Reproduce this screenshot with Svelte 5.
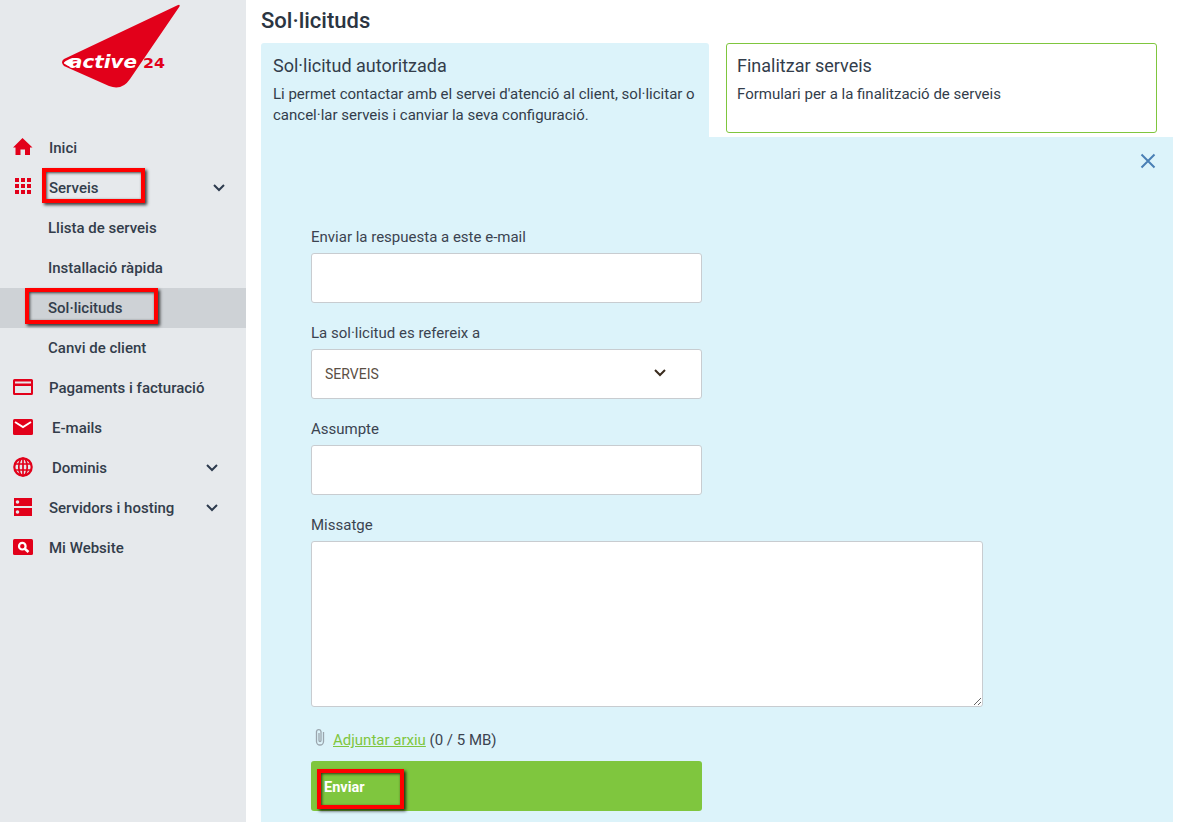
<script>
  const menu = [
    { label: 'Inici', icon: 'home' },
    { label: 'Serveis', icon: 'grid', chev: 'far', mark: 'serveis' },
    { label: 'Llista de serveis', sub: true },
    { label: 'Installació ràpida', sub: true },
    { label: 'Sol·licituds', sub: true, active: true, mark: 'sol' },
    { label: 'Canvi de client', sub: true },
    { label: 'Pagaments i facturació', icon: 'card' },
    { label: 'E-mails', icon: 'mail', wide: true },
    { label: 'Dominis', icon: 'globe', wide: true, chev: 'near' },
    { label: 'Servidors i hosting', icon: 'server', chev: 'near' },
    { label: 'Mi Website', icon: 'search' }
  ];
</script>

<div class="page">
  <aside class="sidebar">
    <div class="logo">
      <svg width="130" height="92" viewBox="0 0 130 92">
        <path d="M118.5 5.2 Q121.5 4 120.5 6.5 L71 79 Q63 91 50 86 L5 66 Q1 62 5 59 Z" fill="#e2001a" />
        <path d="M5 62.5 Q8 59.5 14 58 L13 67 Q8 66 5 63.5 Z" fill="#fff" />
        <text x="10" y="68" class="logo-a" textLength="68" lengthAdjust="spacingAndGlyphs">active</text>
        <text x="84" y="68" class="logo-b" textLength="22" lengthAdjust="spacingAndGlyphs">24</text>
      </svg>
    </div>
    <nav class="menu">
      {#each menu as m}
        <div class="row" class:sub={m.sub} class:active={m.active}>
          {#if m.icon}
            <span class="ico">
              <svg width="22" height="22" viewBox="0 0 22 22" fill="#e2001a">
                {#if m.icon === 'home'}
                  <path d="M10.5 1 L20.5 10.5 L18 10.5 L18 18 L13 18 L13 12.5 L8.5 12.5 L8.5 18 L3.5 18 L3.5 10.5 L1 10.5 Z" />
                {:else if m.icon === 'grid'}
                  {#each [1, 7, 13] as y}
                    {#each [3, 9, 15] as x}
                      <rect {x} {y} width="4" height="4" />
                    {/each}
                  {/each}
                {:else if m.icon === 'card'}
                  <path fill-rule="evenodd" d="M2.5 2 H19.5 Q21 2 21 3.5 V16.5 Q21 18 19.5 18 H2.5 Q1 18 1 16.5 V3.5 Q1 2 2.5 2 Z M3 4.5 V6.5 H19 V4.5 Z M3 9 V16 H19 V9 Z" />
                {:else if m.icon === 'mail'}
                  <rect x="1" y="2" width="20" height="16" rx="1.5" />
                  <path d="M3 5 L11 10 L19 5" fill="none" stroke="#fff" stroke-width="2" />
                {:else if m.icon === 'globe'}
                  <circle cx="11" cy="10" r="8.7" fill="none" stroke="#e2001a" stroke-width="2.2" />
                  <ellipse cx="11" cy="10" rx="4.2" ry="9" fill="none" stroke="#e2001a" stroke-width="1.7" />
                  <path d="M2 7 H20 M2 13 H20 M11 1 V19" stroke="#e2001a" stroke-width="1.7" />
                {:else if m.icon === 'server'}
                  <path fill-rule="evenodd" d="M2 1 H20 V9 H2 Z M5.5 3.2 A1.8 1.8 0 1 0 5.5 6.8 A1.8 1.8 0 1 0 5.5 3.2 Z M2 11 H20 V19 H2 Z M5.5 13.2 A1.8 1.8 0 1 0 5.5 16.8 A1.8 1.8 0 1 0 5.5 13.2 Z" />
                {:else}
                  <rect x="1" y="2" width="20" height="16" rx="1.5" />
                  <circle cx="10.3" cy="9.2" r="3.3" fill="none" stroke="#fff" stroke-width="2.2" />
                  <path d="M12.8 11.8 L16.5 15" stroke="#fff" stroke-width="2.6" />
                {/if}
              </svg>
            </span>
          {/if}
          <span class="label" class:wide={m.wide}>{m.label}</span>
          {#if m.chev}
            <svg class="chev {m.chev}" width="14" height="10" viewBox="0 0 14 10">
              <path d="M2 2 L7 7 L12 2" fill="none" stroke="#2d3b4e" stroke-width="2" />
            </svg>
          {/if}
          {#if m.mark}<span class="mark {m.mark}"></span>{/if}
        </div>
      {/each}
    </nav>
  </aside>

  <main class="main">
    <h1>Sol·licituds</h1>
    <div class="cards">
      <div class="card selected">
        <h2>Sol·licitud autoritzada</h2>
        <p>Li permet contactar amb el servei d'atenció al client, sol·licitar o cancel·lar serveis i canviar la seva configuració.</p>
      </div>
      <div class="card outline">
        <h2>Finalitzar serveis</h2>
        <p>Formulari per a la finalització de serveis</p>
      </div>
    </div>
    <section class="panel">
      <svg class="close" width="16" height="16" viewBox="0 0 16 16">
        <path d="M1.5 1.5 L14.5 14.5 M14.5 1.5 L1.5 14.5" stroke="#4a7fb5" stroke-width="2" />
      </svg>
      <form class="form">
        <label class="field">
          <span>Enviar la respuesta a este e-mail</span>
          <input type="text" />
        </label>
        <div class="field">
          <span>La sol·licitud es refereix a</span>
          <div class="select">
            SERVEIS
            <svg width="14" height="10" viewBox="0 0 14 10">
              <path d="M2 2 L7 7 L12 2" fill="none" stroke="#3a2c1e" stroke-width="2" />
            </svg>
          </div>
        </div>
        <label class="field">
          <span>Assumpte</span>
          <input type="text" />
        </label>
        <label class="field msg">
          <span>Missatge</span>
          <textarea></textarea>
        </label>
        <div class="attach">
          <svg width="14" height="20" viewBox="0 0 14 20">
            <path d="M10.5 5 V14.5 A3.5 3.5 0 0 1 3.5 14.5 V4.5 A2.3 2.3 0 0 1 8 4.5 V13.5 A1 1 0 0 1 6 13.5 V6" fill="none" stroke="#9aa5ad" stroke-width="1.3" />
          </svg>
          <span class="attach-text"><a href="#top">Adjuntar arxiu</a> (0 / 5 MB)</span>
        </div>
        <div class="submit">
          Enviar
          <span class="mark send"></span>
        </div>
      </form>
    </section>
  </main>
</div>

<style>
  :global(body) {
    margin: 0;
    background: #fff;
    font-family: Roboto, "Liberation Sans", sans-serif;
    color: #333d4b;
    overflow: hidden;
  }
  .page {
    display: flex;
    height: 822px;
    width: 1178px;
    overflow: hidden;
  }
  .sidebar {
    width: 246px;
    flex: none;
    background: #e6e9ec;
  }
  .logo {
    height: 128px;
    padding-left: 59px;
    box-sizing: border-box;
  }
  .logo svg { display: block; }
  .logo-a {
    font-family: "DejaVu Sans", sans-serif;
    font-weight: 700;
    font-style: italic;
    font-size: 18px;
    fill: #fff;
  }
  .logo-b {
    font-family: "DejaVu Sans", sans-serif;
    font-weight: 700;
    font-size: 13.5px;
    fill: #e2001a;
  }
  .menu { display: flex; flex-direction: column; }
  .row {
    position: relative;
    display: flex;
    align-items: center;
    height: 40px;
    font-size: 15px;
    font-weight: 500;
    color: #333d4b;
    padding-left: 12px;
  }
  .row.sub { padding-left: 48px; }
  .row.active { background: #ced2d6; }
  .ico { width: 22px; height: 22px; display: block; flex: none; margin-right: 15px; }
  .ico svg { display: block; }
  .label.wide { margin-left: 3px; }
  .chev { position: absolute; top: 15px; }
  .chev.far { left: 212px; }
  .chev.near { left: 205px; }
  .mark {
    position: absolute;
    border: 4px solid #f00;
    box-sizing: border-box;
    box-shadow: 2px 2px 3px rgba(0, 0, 0, 0.75), inset 1px 1px 3px rgba(0, 0, 0, 0.7);
    pointer-events: none;
  }
  .mark.serveis { left: 42px; top: 0; width: 103px; height: 35px; }
  .mark.sol { left: 25px; top: 0; width: 133px; height: 36px; }
  .mark.send { left: 6px; top: 8px; width: 87px; height: 40px; }
  .main {
    flex: 1;
    min-width: 0;
    padding-left: 15px;
  }
  h1 {
    margin: 0;
    height: 43px;
    font-size: 22px;
    font-weight: 500;
    line-height: 41px;
    color: #2b3542;
  }
  .cards { display: flex; height: 94px; }
  .card { box-sizing: border-box; border-radius: 3px; padding-left: 12px; }
  .card h2 {
    margin: 0;
    font-size: 18px;
    font-weight: 400;
    line-height: 24px;
    color: #333d4b;
    padding-top: 11px;
  }
  .card p {
    margin: 6px 0 0;
    font-size: 15px;
    line-height: 21px;
    color: #333d4b;
  }
  .selected {
    width: 448px;
    background: #dcf3fa;
    border-radius: 3px 3px 0 0;
  }
  .outline {
    width: 431px;
    height: 90px;
    margin-left: 17px;
    border: 1px solid #7fc63e;
    padding-left: 10px;
  }
  .outline h2 { padding-top: 10px; }
  .panel {
    position: relative;
    width: 912px;
    height: 685px;
    background: #dcf3fa;
  }
  .close { position: absolute; left: 879px; top: 16px; }
  .form { padding: 88px 0 0 50px; }
  .field { display: block; margin-bottom: 18px; }
  .field span {
    display: block;
    font-size: 15px;
    line-height: 24px;
    margin-bottom: 4px;
    color: #3b4350;
  }
  input, .select, textarea {
    display: block;
    box-sizing: border-box;
    width: 391px;
    height: 50px;
    background: #fff;
    border: 1px solid #c8ccd0;
    border-radius: 3px;
    margin: 0;
    outline: none;
  }
  .select {
    display: flex;
    align-items: center;
    justify-content: space-between;
    padding: 0 34px 0 13px;
    font-size: 14px;
    color: #5b4f45;
  }
  .select svg { margin-top: -3px; }
  textarea {
    width: 672px;
    height: 166px;
  }
  .msg { margin-bottom: 21px; }
  .attach {
    display: flex;
    align-items: center;
    height: 24px;
    padding-left: 2px;
    font-size: 15px;
    color: #3b4350;
  }
  .attach svg { margin-top: -6px; margin-right: 6px; }
  .attach a { color: #7fc63e; }
  .submit {
    position: relative;
    width: 391px;
    height: 50px;
    margin-top: 9px;
    box-sizing: border-box;
    padding-left: 13px;
    border-radius: 3px;
    background: #7fc63e;
    color: #fff;
    font-size: 14.5px;
    font-weight: 700;
    line-height: 53px;
  }
</style>
